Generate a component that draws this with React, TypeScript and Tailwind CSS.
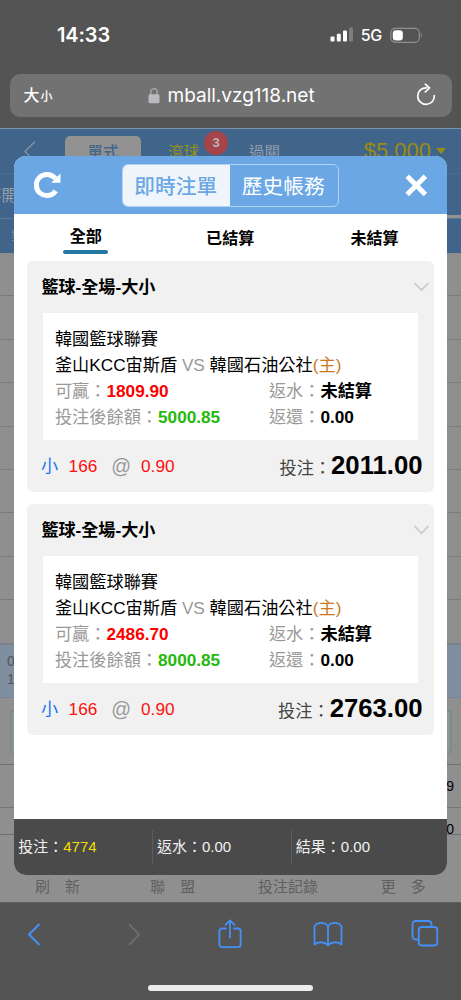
import { clsx } from 'clsx';

type Bet = {
  id: number;
  win: string;
  balance: string;
  stake: string;
};

const bets: Bet[] = [
  { id: 1, win: '1809.90', balance: '5000.85', stake: '2011.00' },
  { id: 2, win: '2486.70', balance: '8000.85', stake: '2763.00' },
];

const tabs = ['全部', '已結算', '未結算'];
const navItems = ['刷\u3000新', '聯\u3000盟', '投注記錄', '更\u3000多'];

function StatusBar() {
  return (
    <div className="flex h-[74px] items-start justify-between pl-[57px] pr-[38px] pt-[23px] text-white">
      <span className="font-['Inter'] text-[20px] font-semibold leading-6 tracking-[-0.1px]">14:33</span>
      <div className="flex h-6 items-center">
        <svg width="24" height="16" viewBox="0 0 24 16" fill="#fff">
          <rect x="0.5" y="9.5" width="4" height="5" rx="1" />
          <rect x="6.8" y="6.8" width="4" height="7.7" rx="1" />
          <rect x="13" y="3.5" width="4" height="11" rx="1" />
          <rect x="19" y="0.5" width="4" height="14" rx="1" fill="#7d7d7d" />
        </svg>
        <span className="ml-[7px] font-['Inter'] text-[16px] font-medium leading-6 tracking-[-0.3px]">5G</span>
        <svg className="ml-2" width="33" height="17" viewBox="0 0 33 17" fill="none">
          <rect x="0.8" y="1.3" width="28.5" height="14" rx="4.5" stroke="#8f8f8f" strokeWidth="1.2" />
          <rect x="2.8" y="3.2" width="10" height="10.4" rx="3" fill="#fff" />
          <path d="M30.8 6v4.6c1.4-.5 1.4-4.1 0-4.6z" fill="#8f8f8f" />
        </svg>
      </div>
    </div>
  );
}

function AddressBar() {
  return (
    <div className="mx-[9.5px] flex h-[42.5px] items-center rounded-[10px] bg-[#727272] pl-[14px] pr-4 text-white">
      <div className="mt-0.5 flex w-[124.5px] items-baseline gap-px font-medium">
        <span className="text-[16px]">大</span>
        <span className="text-[12px]">小</span>
      </div>
      <svg width="12" height="17" viewBox="0 0 12 17">
        <path d="M2.8 8V4.8a3.2 3.2 0 0 1 6.4 0V8" fill="none" stroke="#a8a8ad" strokeWidth="1.4" />
        <rect x="0.5" y="7.2" width="11" height="9" rx="1.5" fill="#b9b9c0" />
      </svg>
      <span className="ml-[7.5px] mt-0.5 flex-1 font-['Inter'] text-[19px]">mball.vzg118.net</span>
      <svg className="mb-0.5" width="20" height="23" viewBox="0 0 20 23" fill="none" stroke="#fff" strokeWidth="1.7" strokeLinecap="round">
        <path d="M10.5 4.8A8.3 8.3 0 1 0 18.3 12.6" />
        <path d="M9.3 1.2l4.2 3.8-4.2 3.9" strokeLinejoin="round" />
      </svg>
    </div>
  );
}

function PageHeader() {
  return (
    <div className="bg-[#41658a]">
      <div className="flex h-[45.5px] items-start border-b border-[#4b6e92] border-t border-t-[#7892ab]">
        <svg className="ml-6 mt-3" width="12" height="21" viewBox="0 0 12 21" fill="none" stroke="#8696a6" strokeWidth="1.2">
          <path d="M11 .5L1 10.5l10 10" />
        </svg>
        <div className="ml-[29px] mt-[7px] h-9 w-[76px] rounded-[5px] bg-[#929292] pt-1.5 text-center text-[15.5px] font-medium leading-[22px] text-[#41658a]">
          單式
        </div>
        <div className="relative ml-[27px] mt-[13px] text-[15.5px] leading-[22px] text-[#94921b]">
          滾球
          <span className="absolute -right-[29px] -top-[11px] size-6 rounded-full bg-[#a54549] text-center text-[13px] font-bold leading-6 text-[#b9b4b4]">
            3
          </span>
        </div>
        <div className="ml-[50px] mt-[13px] text-[15.5px] leading-[22px] text-[#8e9cab]">過關</div>
        <div className="ml-auto mr-[15px] mt-[8px] flex items-center text-[#998c12]">
          <span className="text-[22px] leading-[27px]">$5,000</span>
          <span className="ml-[5px] border-x-[5px] border-t-[6px] border-x-transparent border-t-[#998c12]" />
        </div>
      </div>
      <div className="flex h-[45.5px] items-center border-b border-[#587897] text-[15.5px] text-[#94a0ac]">
        <span className="-ml-[14px]">不開</span>
        <span className="ml-auto h-[3px] w-5 self-end bg-[#929292]" />
      </div>
      <div className="h-[34px] pl-[11px] text-[13px] leading-[34px] text-[#75899d]">對</div>
    </div>
  );
}

function PageRows() {
  return (
    <div className="flex-1 text-[14px]">
      {Array.from({ length: 9 }, (_, i) => (
        <div key={i} className="h-[43.4px] border-b border-[#7c7c7c]" />
      ))}
      <div className="h-[54px] border-y border-[#74879a] bg-[#7f8f9f] pl-[7px] pt-[7px] leading-[18px] text-[#4d555d]">
        <div>06</div>
        <div>14</div>
      </div>
      <div className="h-[67px] border-b border-[#6f6f6f] px-[9.5px] pt-3">
        <div className="h-[43px] border-2 border-[#789084] bg-[#8f9592]" />
      </div>
      <div className="h-[43.5px] border-b border-[#777] pr-[7px] text-right leading-[43px] text-black">9</div>
      <div className="h-[27px] border-b border-[#6f6f6f] pr-[7px] text-right leading-[43px] text-black">0</div>
    </div>
  );
}

function BetCard({ bet }: { bet: Bet }) {
  return (
    <div className="h-[231px] rounded-[6px] bg-[#f1f1f1]">
      <div className="flex h-[52px] items-center justify-between pl-[14.5px] pr-1">
        <h3 className="mt-0.5 text-[17.1px] font-bold text-black">籃球-全場-大小</h3>
        <svg width="17" height="10" viewBox="0 0 17 10" fill="none" stroke="#ccc" strokeWidth="1.7">
          <path d="M1.5 1.2l7 7 7-7" />
        </svg>
      </div>
      <div className="mx-4 h-[127px] bg-white px-3 pt-[12.5px] text-[17.2px] leading-[26px]">
        <div className="text-black">韓國籃球聯賽</div>
        <div className="whitespace-nowrap text-black">
          釜山KCC宙斯盾 <span className="text-[#999]">VS</span> 韓國石油公社<span className="text-[#cc781f]">(主)</span>
        </div>
        <div className="grid grid-cols-[214px_1fr] whitespace-nowrap text-[#999]">
          <div>
            可贏：<b className="text-[#fd0000]">{bet.win}</b>
          </div>
          <div>
            返水：<b className="text-black">未結算</b>
          </div>
          <div>
            投注後餘額：<b className="text-[#24b90c]">{bet.balance}</b>
          </div>
          <div>
            返還：<b className="text-black">0.00</b>
          </div>
        </div>
      </div>
      <div className="flex h-[52px] items-center pl-3.5 pr-[11px] text-[17.2px]">
        <span className="mt-0.5 text-[#1773f5]">小</span>
        <span className="ml-[10.5px] mt-0.5 text-[#fd1010]">166</span>
        <span className="ml-3.5 mt-0.5 text-[19.5px] text-[#999]">@</span>
        <span className="ml-2.5 mt-0.5 text-[#fd1010]">0.90</span>
        <div className="mb-px ml-auto flex items-baseline text-[#444]">
          投注：<b className="text-[25.7px] leading-8 text-black">{bet.stake}</b>
        </div>
      </div>
    </div>
  );
}

function BetModal() {
  return (
    <div className="absolute bottom-[27px] left-[13.7px] right-[14.3px] top-[28px] flex flex-col overflow-hidden rounded-[12px] bg-white">
      <div className="flex h-[58px] items-center bg-[#6aa7e4] pl-[20px] pr-[19px]">
        <svg width="28" height="28" viewBox="0 0 28 28" fill="none">
          <path d="M21.8 19.8a10.6 10.6 0 1 1-.4-12.2" stroke="#fff" strokeWidth="5" />
          <path d="M26.5 2.5v9.3h-9.3z" fill="#fff" />
        </svg>
        <div className="ml-[60.3px] flex h-[43px] w-[217px] overflow-hidden rounded-[6px] border border-[#b5d3f2] text-[20.7px] leading-[43px]">
          <button className="w-[107.5px] bg-[#f0f5fc] pr-0.5 font-medium text-[#6aa7e4]">即時注單</button>
          <button className="flex-1 pr-0.5 text-white">歷史帳務</button>
        </div>
        <svg className="ml-auto" width="23" height="23" viewBox="0 0 23 23" fill="none" stroke="#fff" strokeWidth="5">
          <path d="M2.2 2.2l18.2 18.2M20.4 2.2L2.2 20.4" />
        </svg>
      </div>
      <div className="grid h-[47px] grid-cols-3 text-center text-[16.1px] font-bold text-black">
        {tabs.map((tab, i) => (
          <div key={tab} className={clsx(i === 0 ? 'pt-2.5' : 'pt-3')}>
            <div className="leading-6">{tab}</div>
            {i === 0 && <div className="mx-auto mt-[2px] h-1 w-[45px] rounded-full bg-[#2478a4]" />}
          </div>
        ))}
      </div>
      <div className="flex flex-1 flex-col gap-3 px-[13.2px]">
        {bets.map((bet) => (
          <BetCard key={bet.id} bet={bet} />
        ))}
      </div>
      <div className="grid h-14 grid-cols-3 items-center bg-[#4a4a4a] text-[15px] text-[#f1f1f1]">
        <div className="pl-[4.5px]">
          投注：<span className="text-[#f3dd00]">4774</span>
        </div>
        <div className="-ml-1.5 h-[34px] border-l border-[#5c5c5c] pl-1 leading-[34px]">返水：0.00</div>
        <div className="-ml-[11.5px] h-[34px] border-l border-[#5c5c5c] pl-1 leading-[34px]">結果：0.00</div>
      </div>
    </div>
  );
}

function BrowserToolbar() {
  return (
    <div className="flex h-[98px] flex-col items-center border-t border-[#616161] bg-[#545454]">
      <div className="flex w-full flex-1 items-start pl-[26.5px] pt-4">
        <svg className="mt-1" width="14" height="23" viewBox="0 0 14 23" fill="none" stroke="#4490f8" strokeWidth="2">
          <path d="M12.5 1L2 11.5 12.5 22" />
        </svg>
        <svg className="ml-[86px] mt-1" width="14" height="23" viewBox="0 0 14 23" fill="none" stroke="#707070" strokeWidth="1.7">
          <path d="M2 1l10 10.5L2 22" />
        </svg>
        <svg className="ml-[77.5px]" width="24" height="30" viewBox="0 0 24 30" fill="none" stroke="#4490f8" strokeWidth="1.8" strokeLinecap="round" strokeLinejoin="round">
          <path d="M7.8 9.5H4a2.6 2.6 0 0 0-2.6 2.6v13.5A2.6 2.6 0 0 0 4 28.2h16a2.6 2.6 0 0 0 2.6-2.6V12.1A2.6 2.6 0 0 0 20 9.500h-3.800" />
          <path d="M12 18.5v-17M7.5 5.8L12 1.3l4.5 4.5" />
        </svg>
        <svg className="ml-[71px] mt-[3px]" width="30" height="25" viewBox="0 0 30 25" fill="none" stroke="#4490f8" strokeWidth="1.8" strokeLinejoin="round">
          <path d="M15 4C12-.2 4.500-.2 1.500 4v18.500c3-3 10.500-3 13.500.8 3-3.800 10.500-3.800 13.500-.8V4C25.500-.2 18-.2 15 4zM15 4v19" />
        </svg>
        <svg className="ml-[68px]" width="28" height="28" viewBox="0 0 28 28" fill="none" stroke="#4490f8" strokeWidth="1.8">
          <rect x="7.8" y="8" width="18.5" height="18.5" rx="3" />
          <path d="M7.8 20.5H4.500a3 3 0 0 1-3-3V5a3 3 0 0 1 3-3h13a3 3 0 0 1 3 3v3" />
        </svg>
      </div>
      <div className="mb-[9px] h-[6.5px] w-[165px] rounded-full bg-[#ececec]" />
    </div>
  );
}

export default function App() {
  return (
    <div className="flex h-[1000px] w-[461px] flex-col overflow-hidden bg-[#545454] font-['Liberation_Sans','Noto_Sans_CJK_TC',sans-serif]">
      <header className="h-[128px]">
        <StatusBar />
        <AddressBar />
      </header>
      <main className="relative flex h-[774px] flex-col bg-[#8f8f8f]">
        <PageHeader />
        <PageRows />
        <div className="grid h-[30px] grid-cols-4 text-center text-[15px] leading-[30px] text-[#606060]">
          {navItems.map((item) => (
            <div key={item}>{item}</div>
          ))}
        </div>
        <BetModal />
      </main>
      <BrowserToolbar />
    </div>
  );
}
